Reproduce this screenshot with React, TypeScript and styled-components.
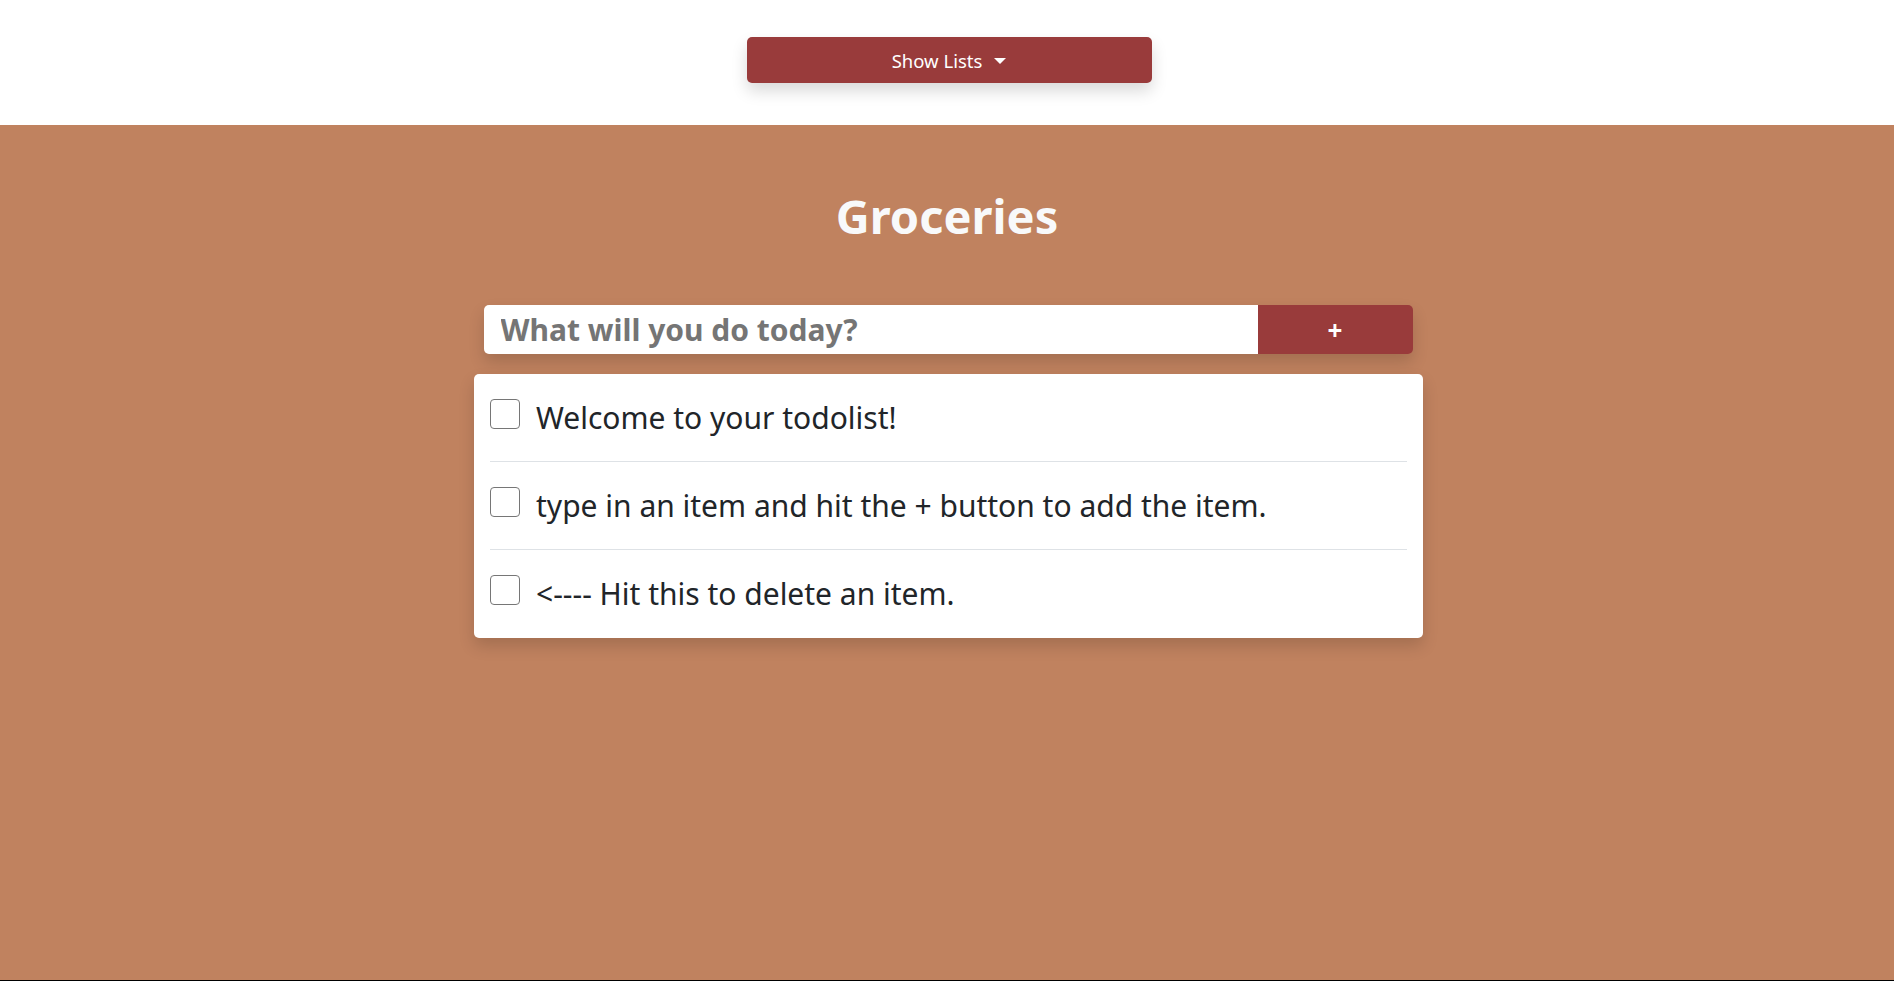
import React, {useState} from 'react';
import styled, {createGlobalStyle} from "styled-components";

const GlobalStyle = createGlobalStyle`
html {
background: #000;
}
body {
margin: 0;
font-family: "Noto Sans", "Open Sans", sans-serif;
color: #212529;
}
`;

type Todo = {
    id: number;
    text: string;
    done: boolean;
}

const INITIAL_TODOS: Todo[] = [
    {id: 1, text: 'Welcome to your todolist!', done: false},
    {id: 2, text: 'type in an item and hit the + button to add the item.', done: false},
    {id: 3, text: '<---- Hit this to delete an item.', done: false},
];

export default function App() {

    const [todos, setTodos] = useState<Todo[]>(INITIAL_TODOS);
    const [draft, setDraft] = useState('');

    const addTodo = () => {
        if (!draft.trim()) return;
        setTodos(it => [...it, {id: Date.now(), text: draft, done: false}]);
        setDraft('');
    };

    const removeTodo = (id: number) => {
        setTodos(it => it.filter(todo => todo.id !== id));
    };

    return (
        <>
            <GlobalStyle/>
            <Header>
                <DropdownButton type="button">
                    Show Lists
                    <Caret/>
                </DropdownButton>
            </Header>
            <Main>
                <Title>Groceries</Title>
                <InputRow>
                    <TodoInput
                        placeholder="What will you do today?"
                        value={draft}
                        onChange={e => setDraft(e.target.value)}
                        onKeyDown={e => e.key === 'Enter' && addTodo()}
                    />
                    <AddButton type="button" onClick={addTodo}>+</AddButton>
                </InputRow>
                <TodoCard>
                    {todos.map((todo, index) => (
                        <TodoRow key={todo.id} lastOfType={index === todos.length - 1}>
                            <Check type="checkbox" onChange={() => removeTodo(todo.id)}/>
                            <TodoText>{todo.text}</TodoText>
                        </TodoRow>
                    ))}
                </TodoCard>
            </Main>
        </>
    );
}

const Header = styled.header`
height: 125px;
box-sizing: border-box;
padding-top: 37px;
background: #fff;
display: flex;
justify-content: center;
align-items: flex-start;
`;

const DropdownButton = styled.button`
width: 405px;
height: 46px;
margin-left: 4px;
border: none;
border-radius: 5px;
background: #993b3b;
color: #fff;
font-family: "Noto Sans", sans-serif;
font-size: 18.5px;
display: flex;
align-items: center;
justify-content: center;
gap: 12px;
box-shadow: 0 8px 16px rgba(0, 0, 0, .15);
cursor: pointer;
`;

const Caret = styled.span`
width: 0;
height: 0;
border-left: 6px solid transparent;
border-right: 6px solid transparent;
border-top: 6px solid #fff;
margin-top: 1px;
`;

const Main = styled.main`
background: #c0825f;
height: 855px;
display: flex;
flex-direction: column;
align-items: center;
`;

const Title = styled.h1`
margin: 63px 0 0;
color: #f8f9fa;
font-size: 47px;
font-weight: 700;
line-height: 1.2;
`;

const InputRow = styled.div`
margin-top: 61px;
width: 929px;
height: 49px;
display: flex;
border-radius: 5px;
box-shadow: 0 8px 16px rgba(0, 0, 0, .15);
margin-left: 2px;
`;

const TodoInput = styled.input`
flex: 1;
min-width: 0;
border: none;
border-radius: 5px 0 0 5px;
padding: 0 17px;
font-family: "Noto Sans", sans-serif;
font-size: 30px;
font-weight: 700;
color: #212529;
outline: none;

&::placeholder {
color: #757575;
opacity: 1;
}
`;

const AddButton = styled.button`
width: 155px;
border: none;
border-radius: 0 5px 5px 0;
background: #993b3b;
color: #fff;
font-family: "Noto Sans", sans-serif;
font-size: 26px;
font-weight: 700;
cursor: pointer;
`;

const TodoCard = styled.ul`
list-style: none;
margin: 20px 0 0;
padding: 0 16px;
width: 949px;
box-sizing: border-box;
background: #fff;
border-radius: 5px;
box-shadow: 0 8px 16px rgba(0, 0, 0, .15);
margin-left: 3px;
`;

type TodoRowProps = {
    lastOfType: boolean;
}

const TodoRow = styled.li<TodoRowProps>`
height: 88px;
box-sizing: border-box;
display: flex;
align-items: flex-start;
padding-top: 25px;
gap: 16px;
border-bottom: ${props => props.lastOfType ? 'none' : '1px solid #dee2e6'};
`;

const Check = styled.input`
appearance: none;
margin: 0;
width: 30px;
height: 30px;
flex: none;
border: 1.5px solid #767676;
border-radius: 4px;
background: #fff;
cursor: pointer;
`;

const TodoText = styled.span`
font-size: 30px;
line-height: 38px;
`;
